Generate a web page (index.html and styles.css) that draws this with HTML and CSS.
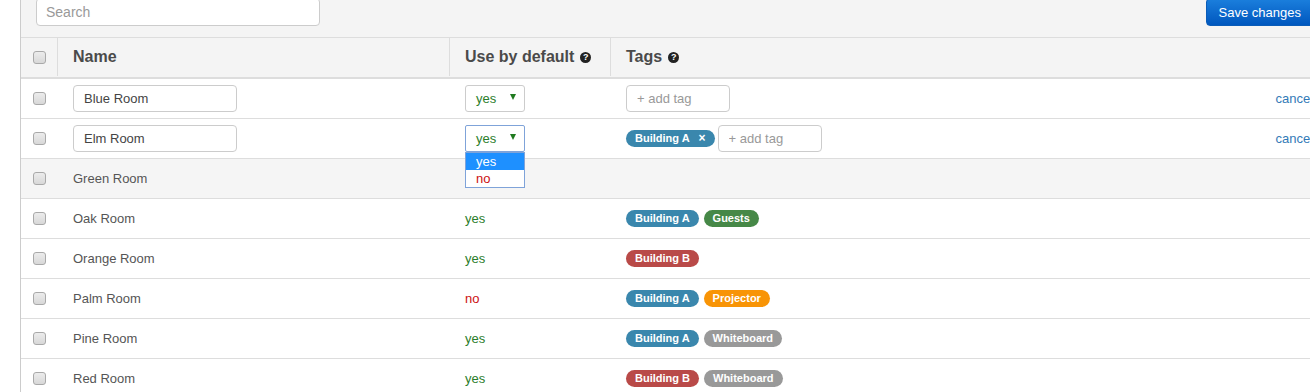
FILE: index.html
```html
<!DOCTYPE html>
<html lang="en">
<head>
    <meta charset="UTF-8">
    <title>Rooms</title>
    <link rel="stylesheet" href="styles.css">
</head>
<body>
    <div class="page">
        <div class="toolbar">
            <input class="search" type="text" placeholder="Search">
            <button class="btn-save">Save changes</button>
        </div>

        <div class="grid">
            <div class="row head">
                <div class="cell check"><span class="box"></span></div>
                <div class="cell">Name</div>
                <div class="cell">Use by default <span class="help">?</span></div>
                <div class="cell last">Tags <span class="help">?</span></div>
                <div class="cell"></div>
            </div>

            <div class="row">
                <div class="cell check"><span class="box"></span></div>
                <div class="cell"><input class="name-input" type="text" value="Blue Room"></div>
                <div class="cell"><div class="select"><span>yes</span><i class="caret"></i></div></div>
                <div class="cell tags"><input class="tag-input" type="text" placeholder="+ add tag"></div>
                <div class="cell action"><a href="#">cancel</a></div>
            </div>

            <div class="row">
                <div class="cell check"><span class="box"></span></div>
                <div class="cell"><input class="name-input" type="text" value="Elm Room"></div>
                <div class="cell">
                    <div class="select focused">
                        <span>yes</span><i class="caret"></i>
                        <ul class="options">
                            <li class="selected">yes</li>
                            <li class="no">no</li>
                        </ul>
                    </div>
                </div>
                <div class="cell tags">
                    <span class="tag blue">Building A <b class="remove">&times;</b></span>
                    <input class="tag-input" type="text" placeholder="+ add tag">
                </div>
                <div class="cell action"><a href="#">cancel</a></div>
            </div>

            <div class="row hover">
                <div class="cell check"><span class="box"></span></div>
                <div class="cell">Green Room</div>
                <div class="cell"></div>
                <div class="cell tags"></div>
                <div class="cell"></div>
            </div>

            <div class="row">
                <div class="cell check"><span class="box"></span></div>
                <div class="cell">Oak Room</div>
                <div class="cell yes">yes</div>
                <div class="cell tags"><span class="tag blue">Building A</span><span class="tag green">Guests</span></div>
                <div class="cell"></div>
            </div>

            <div class="row">
                <div class="cell check"><span class="box"></span></div>
                <div class="cell">Orange Room</div>
                <div class="cell yes">yes</div>
                <div class="cell tags"><span class="tag red">Building B</span></div>
                <div class="cell"></div>
            </div>

            <div class="row">
                <div class="cell check"><span class="box"></span></div>
                <div class="cell">Palm Room</div>
                <div class="cell no">no</div>
                <div class="cell tags"><span class="tag blue">Building A</span><span class="tag orange">Projector</span></div>
                <div class="cell"></div>
            </div>

            <div class="row">
                <div class="cell check"><span class="box"></span></div>
                <div class="cell">Pine Room</div>
                <div class="cell yes">yes</div>
                <div class="cell tags"><span class="tag blue">Building A</span><span class="tag gray">Whiteboard</span></div>
                <div class="cell"></div>
            </div>

            <div class="row">
                <div class="cell check"><span class="box"></span></div>
                <div class="cell">Red Room</div>
                <div class="cell yes">yes</div>
                <div class="cell tags"><span class="tag red">Building B</span><span class="tag gray">Whiteboard</span></div>
                <div class="cell"></div>
            </div>
        </div>
    </div>
</body>
</html>
```

FILE: styles.css
```css
:root {
    --border: #dddddd;
    --muted-bg: #f4f4f4;
    --text: #555555;
    --yes: #2b7d2b;
    --no: #cc1111;
}

* {
    margin: 0;
    padding: 0;
    box-sizing: border-box;
    font-family: "Liberation Sans", Arial, sans-serif;
}

body {
    background: #ffffff;
    overflow: hidden;
    color: var(--text);
    font-size: 13px;
}

.page {
    margin-left: 20px;
    width: 1308px;
    border-left: 1px solid #cccccc;
    min-height: 392px;
}

.toolbar {
    height: 37px;
    background: var(--muted-bg);
    display: flex;
    justify-content: space-between;
    align-items: flex-start;
    padding: 0 14px 0 15px;
}

.search {
    width: 284px;
    height: 28px;
    margin-top: -2px;
    border: 1px solid #cccccc;
    border-radius: 4px;
    padding: 0 9px;
    font-size: 14px;
    color: #555;
    background: #ffffff;
    outline: none;
}

.search::placeholder {
    color: #999999;
}

.btn-save {
    height: 28px;
    margin-top: -2px;
    padding: 0 12px;
    border: 1px solid #0a5cb8;
    border-radius: 4px;
    background: linear-gradient(#1b7fdd, #0057be);
    color: #ffffff;
    font-size: 13px;
    cursor: pointer;
}

.row {
    display: grid;
    grid-template-columns: 37px 392px 161px 1fr auto;
    height: 40px;
    border-bottom: 1px solid var(--border);
    background: #ffffff;
    padding-bottom: 1px;
}

.row.head {
    height: 42px;
    border-top: 1px solid var(--border);
    border-bottom: 2px solid var(--border);
    background: var(--muted-bg);
    font-size: 16px;
    font-weight: 700;
    color: #4a4a4a;
}

.row.head .cell {
    border-right: 1px solid var(--border);
}

.row.head .cell.last,
.row.head .cell:last-child {
    border-right: none;
}

.row.hover {
    background: #f5f5f5;
}

.cell {
    display: flex;
    align-items: center;
    padding: 0 15px;
    gap: 5px;
    position: relative;
}

.cell.check {
    padding: 0 0 0 12px;
}

.box {
    width: 13px;
    height: 13px;
    border: 1px solid #a9a9a9;
    border-radius: 3px;
    background: linear-gradient(#ececec, #d8d8d8);
}

.help {
    width: 11px;
    height: 11px;
    border-radius: 50%;
    background: #222222;
    color: #ffffff;
    font-size: 9px;
    font-weight: 700;
    line-height: 11px;
    text-align: center;
    margin-left: 1px;
}

.name-input {
    width: 164px;
    height: 27px;
    border: 1px solid #cccccc;
    border-radius: 4px;
    padding: 0 10px;
    font-size: 13px;
    color: #444;
    outline: none;
}

.select {
    width: 60px;
    height: 27px;
    border: 1px solid #cccccc;
    border-radius: 3px;
    display: flex;
    align-items: center;
    justify-content: space-between;
    padding: 0 8px 0 10px;
    color: var(--yes);
    position: relative;
    background: #ffffff;
}

.select.focused {
    border-color: #7fa3d9;
    border-radius: 2px;
}

.caret {
    width: 0;
    height: 0;
    border-left: 3px solid transparent;
    border-right: 3px solid transparent;
    border-top: 6px solid #1f7a1f;
    margin-top: -3px;
}

.options {
    list-style: none;
    position: absolute;
    top: 26px;
    left: -1px;
    width: 60px;
    border: 1px solid #7fa3d9;
    background: #ffffff;
    z-index: 2;
}

.options li {
    height: 17px;
    line-height: 17px;
    padding-left: 10px;
    font-size: 13px;
}

.options li.selected {
    background: #1e90ff;
    color: #ffffff;
}

.options li.no {
    color: var(--no);
}

.yes {
    color: var(--yes);
}

.no {
    color: var(--no);
}

.tags {
    gap: 5px;
}

.tag-input {
    width: 104px;
    height: 27px;
    border: 1px solid #cccccc;
    border-radius: 4px;
    padding: 0 10px;
    font-size: 13px;
    outline: none;
}

.tags .tag + .tag-input {
    margin-left: -2px;
}

.tag-input::placeholder {
    color: #999999;
}

.tag {
    display: inline-flex;
    align-items: center;
    height: 17px;
    padding: 0 9px;
    border-radius: 9px;
    color: #ffffff;
    font-size: 11px;
    font-weight: 700;
    white-space: nowrap;
}

.remove {
    margin-left: 9px;
    font-size: 12px;
}

.blue { background: #3a87ad; }
.green { background: #468847; }
.red { background: #b94a48; }
.orange { background: #f89406; }
.gray { background: #999999; }

.action {
    justify-content: flex-end;
}

.action a {
    color: #337ab7;
    text-decoration: none;
    font-size: 13px;
}
```
